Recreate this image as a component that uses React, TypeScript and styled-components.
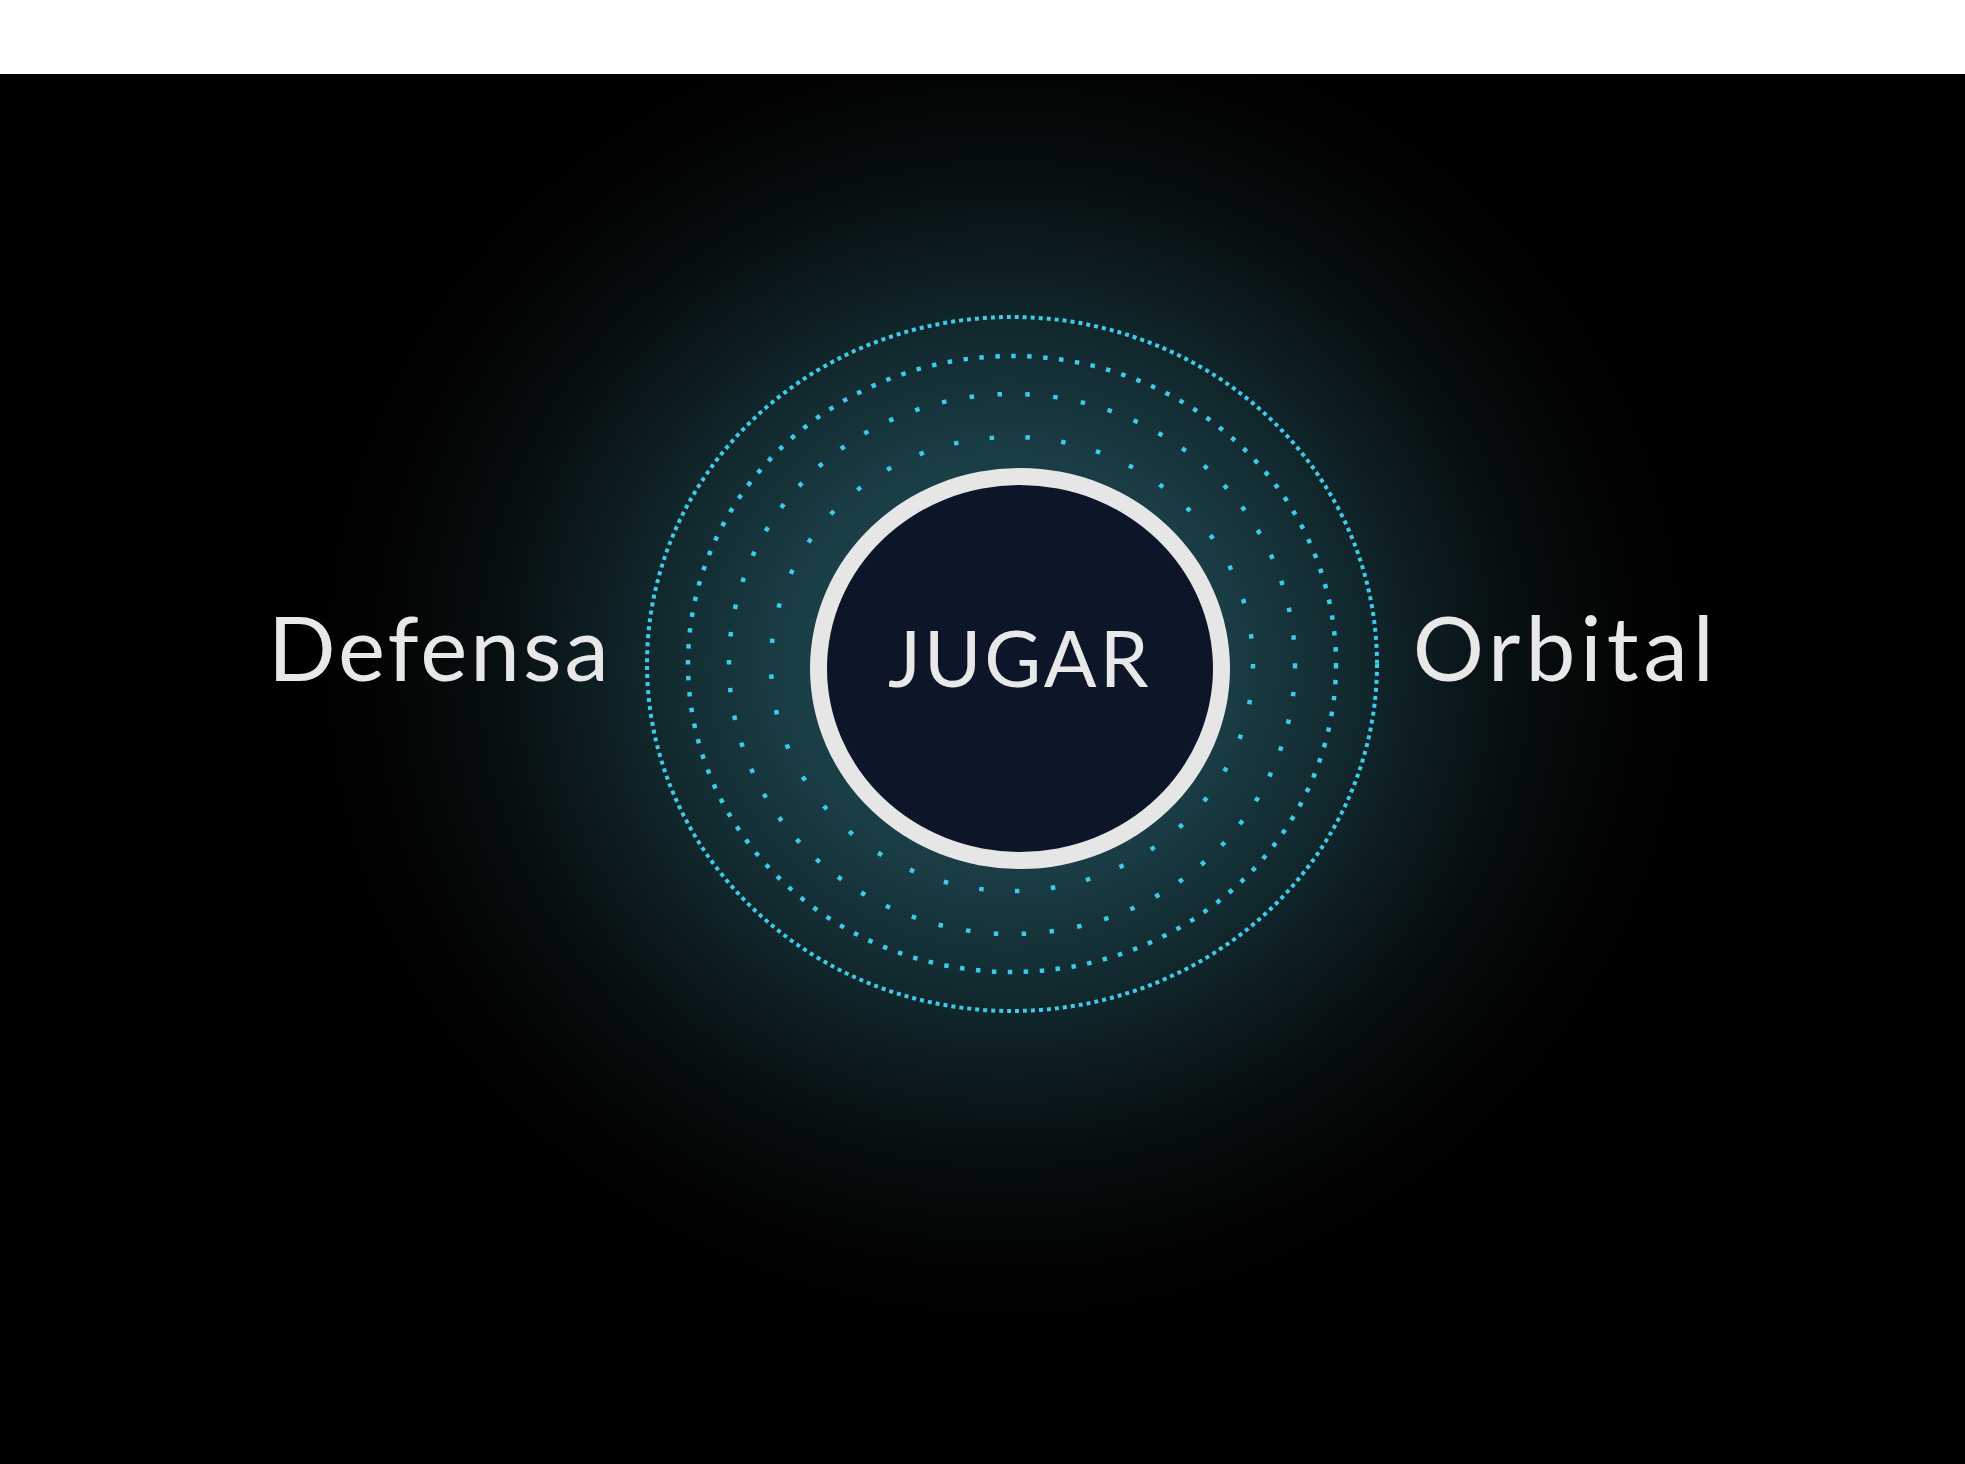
import styled, { createGlobalStyle } from "styled-components";

const GlobalStyle = createGlobalStyle`
  html, body {
    margin: 0;
    padding: 0;
    background: #ffffff;
  }
  body {
    font-family: Lato, "Open Sans", sans-serif;
  }
`;

const Page = styled.div`
  display: flex;
  flex-direction: column;
  width: 1965px;
  height: 1464px;
`;

const TopBand = styled.div`
  height: 74px;
  background: #ffffff;
`;

const Stage = styled.main`
  flex: 1;
  display: flex;
  align-items: flex-start;
  justify-content: flex-start;
  padding: 241px 0 0 268px;
  background: radial-gradient(
    ellipse 700px 670px at 1005px 590px,
    #1f4a53 0%,
    #1a3d45 32%,
    #10262b 52%,
    #070f11 72%,
    #020303 90%,
    #000000 100%
  );
`;

const Row = styled.div`
  display: flex;
  align-items: center;
`;

const SideLabel = styled.span<{ $spacing: number; $gapLeft?: number; $gapRight?: number }>`
  font-family: Lato, "Open Sans", sans-serif;
  font-size: 89px;
  font-weight: 400;
  letter-spacing: ${(p) => p.$spacing}px;
  color: #e8e8e8;
  margin: 0 ${(p) => p.$gapRight ?? 0}px 36px ${(p) => p.$gapLeft ?? 0}px;
`;

const Orbit = styled.div`
  display: grid;
  width: 734px;
  height: 698px;
  place-items: center;

  & > * {
    grid-area: 1 / 1;
  }
`;

const Rings = styled.svg`
  width: 734px;
  height: 698px;
  display: block;
`;

const PlayButton = styled.button`
  width: 420px;
  height: 401px;
  box-sizing: border-box;
  border: 17px solid #e6e6e6;
  border-radius: 50%;
  background: #0c1628;
  color: #e8e8e8;
  font-family: Lato, "Open Sans", sans-serif;
  font-size: 78px;
  font-weight: 400;
  letter-spacing: 3px;
  padding: 0 0 22px;
  cursor: pointer;
  transform: translate(8px, 4px);
`;

const rings = [
  { rx: 365, ry: 347, w: 4, dash: "4 4" },
  { rx: 324, ry: 308, w: 4.5, dash: "4.5 11.5" },
  { rx: 283, ry: 270, w: 4.5, dash: "4.5 23.5" },
  { rx: 241, ry: 227, w: 4.5, dash: "4.5 31.5" },
];

export default function App() {
  return (
    <>
      <GlobalStyle />
      <Page>
        <TopBand />
        <Stage>
          <Row>
            <SideLabel $spacing={3} $gapRight={33}>
              Defensa
            </SideLabel>
            <Orbit>
              <Rings viewBox="0 0 734 698">
                {rings.map((r, i) => (
                  <ellipse
                    key={i}
                    cx={367}
                    cy={349}
                    rx={r.rx}
                    ry={r.ry}
                    fill="none"
                    stroke="#3ccbeb"
                    strokeWidth={r.w}
                    strokeDasharray={r.dash}
                  />
                ))}
              </Rings>
              <PlayButton>JUGAR</PlayButton>
            </Orbit>
            <SideLabel $spacing={5} $gapLeft={34}>
              Orbital
            </SideLabel>
          </Row>
        </Stage>
      </Page>
    </>
  );
}
